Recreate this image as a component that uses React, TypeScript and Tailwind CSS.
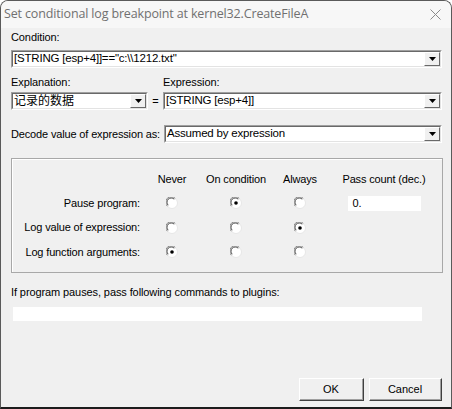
import React from "react";

const ui = { fontFamily: '"Liberation Sans", Arial, sans-serif' };
const cjk = { fontFamily: '"Liberation Sans", "Noto Sans CJK SC", sans-serif' };

function Arrow() {
  return (
    <div className="flex h-full w-[16px] shrink-0 items-center justify-center border-t border-l border-t-white border-l-white border-b border-r border-b-[#696969] border-r-[#696969] bg-[#f0f0f0]">
      <svg width="7" height="4" viewBox="0 0 7 4">
        <path d="M0 0h7L3.5 4z" fill="#000" />
      </svg>
    </div>
  );
}

function Combo({ value, className, cn }: { value: string; className: string; cn?: boolean }) {
  return (
    <div className={`h-[18px] border-t border-l border-t-[#a0a0a0] border-l-[#a0a0a0] border-b border-r border-b-white border-r-white ${className}`}>
      <div className="flex h-full items-stretch border-t border-l border-t-[#696969] border-l-[#696969] border-b border-r border-b-[#e3e3e3] border-r-[#e3e3e3] bg-white">
        <div
          className={`flex flex-1 items-center overflow-hidden whitespace-nowrap pl-[1px] ${cn ? "text-[12px]" : "text-[11.5px] tracking-[-0.2px]"}`}
          style={cn ? cjk : ui}
        >
          {value}
        </div>
        <Arrow />
      </div>
    </div>
  );
}

function Radio({ on }: { on?: boolean }) {
  return (
    <svg width="12" height="12" viewBox="0 0 12 12">
      <circle cx="6" cy="6" r="5.5" fill="#fff" stroke="#e6e6e6" />
      <path d="M1.3 9.2A5 5 0 0 1 9.2 1.3" fill="none" stroke="#8a8a8a" strokeWidth="1" />
      <path d="M2.2 8.2A4 4 0 0 1 8.2 2.2" fill="none" stroke="#4a4a4a" strokeWidth="1" />
      {on && <circle cx="6" cy="6" r="1.8" fill="#000" />}
    </svg>
  );
}

const rows: { label: string; sel: number }[] = [
  { label: "Pause program:", sel: 1 },
  { label: "Log value of expression:", sel: 2 },
  { label: "Log function arguments:", sel: 0 },
];

function Btn({ label, w }: { label: string; w: string }) {
  return (
    <div className={`${w} h-[23px] border-t border-l border-t-white border-l-white border-b border-r border-b-[#404040] border-r-[#404040]`}>
      <div className="flex h-full items-center justify-center border-b border-r border-b-[#a0a0a0] border-r-[#a0a0a0] bg-[#f0f0f0] text-[11px]">
        {label}
      </div>
    </div>
  );
}

export default function App() {
  return (
    <div className="h-[409px] w-[452px] bg-white">
      <div className="flex h-full flex-col overflow-hidden rounded-t-[8px] border border-[#5a5a5a] border-b-2 border-b-[#1c1c1c] bg-[#f0f0f0]" style={ui}>
        <div className="flex h-[27px] shrink-0 items-center justify-between bg-[#f7f7f7] pl-[3px] pr-[10px]">
          <span className="text-[12.5px] tracking-[-0.15px] text-[#707070]" style={{ fontFamily: '"Open Sans", "Noto Sans", sans-serif' }}>
            Set conditional log breakpoint at kernel32.CreateFileA
          </span>
          <svg width="11" height="11" viewBox="0 0 11 11">
            <path d="M0.5 0.5l10 10M10.5 0.5l-10 10" stroke="#8a8a8a" strokeWidth="1" />
          </svg>
        </div>

        <div className="flex flex-1 flex-col pl-[10px] pr-[9px] text-black">
          <div className="mt-[3px] h-[13px] text-[11px] leading-[13px] tracking-[-0.1px]">Condition:</div>
          <Combo className="mt-[6px] w-[431px]" value={'[STRING [esp+4]]=="c:\\\\1212.txt"'} />

          <div className="mt-[8px] flex h-[13px] text-[11px] leading-[13px] tracking-[-0.1px]">
            <span className="w-[152px]">Explanation:</span>
            <span>Expression:</span>
          </div>
          <div className="mt-[3px] flex items-center">
            <Combo className="w-[137px]" value="记录的数据" cn />
            <span className="w-[15px] text-center text-[11px]">=</span>
            <Combo className="w-[279px]" value="[STRING [esp+4]]" />
          </div>

          <div className="mt-[15px] flex items-center">
            <span className="w-[153px] whitespace-nowrap text-[11px] tracking-[-0.15px]">Decode value of expression as:</span>
            <Combo className="w-[278px]" value="Assumed by expression" />
          </div>

          <div className="mt-[15px] h-[115px] w-[432px] border border-[#a8a8a8] shadow-[inset_1px_1px_0_#fff]">
            <div className="grid grid-cols-[132px_56px_72px_56px_112px] grid-rows-[24px_24px_25px_24px] pt-[8px] text-[11px] tracking-[-0.15px]">
              <div />
              <div className="flex items-center justify-center">Never</div>
              <div className="flex items-center justify-center">On condition</div>
              <div className="flex items-center justify-center">Always</div>
              <div className="flex items-center justify-center">Pass count (dec.)</div>
              {rows.map((r, i) => (
                <React.Fragment key={r.label}>
                  <div className="flex items-center justify-end pr-[4px]">{r.label}</div>
                  {[0, 1, 2].map((c) => (
                    <div key={c} className="flex items-center justify-center">
                      <Radio on={r.sel === c} />
                    </div>
                  ))}
                  <div className="flex items-center justify-center">
                    {i === 0 && (
                      <div className="flex h-[15px] w-[73px] items-center bg-white pl-[5px]">0.</div>
                    )}
                  </div>
                </React.Fragment>
              ))}
            </div>
          </div>

          <div className="mt-[13px] h-[13px] text-[11px] leading-[13px] tracking-[-0.1px]">
            If program pauses, pass following commands to plugins:
          </div>
          <div className="ml-[2px] mt-[8px] h-[14px] w-[409px] bg-white" />

          <div className="mt-auto mb-[6px] flex justify-end gap-[5px]">
            <Btn label="OK" w="w-[65px]" />
            <Btn label="Cancel" w="w-[73px]" />
          </div>
        </div>
      </div>
    </div>
  );
}
